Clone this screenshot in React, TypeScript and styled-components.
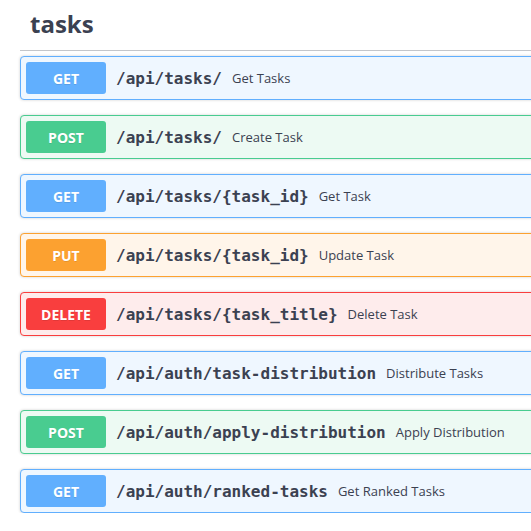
import React from "react";
import styled, { createGlobalStyle } from "styled-components";

const Global = createGlobalStyle`
  html, body { margin: 0; padding: 0; background: #fff; overflow: hidden; }
  body { font-family: "Open Sans", sans-serif; color: #3b4151; }
`;

type Method = "GET" | "POST" | "PUT" | "DELETE";

const colors: Record<Method, { main: string; bg: string }> = {
  GET: { main: "#61affe", bg: "#eff7ff" },
  POST: { main: "#49cc90", bg: "#edfaf3" },
  PUT: { main: "#fca130", bg: "#fff5ea" },
  DELETE: { main: "#f93e3e", bg: "#feecec" },
};

const Wrapper = styled.div`
  width: 600px;
  padding: 0 0 0 20px;
  display: flex;
  flex-direction: column;
`;

const TagHeading = styled.h3`
  margin: 0 0 5px;
  padding: 7px 20px 10px 10px;
  font-family: "Open Sans", sans-serif;
  font-size: 24px;
  font-weight: 700;
  line-height: normal;
  color: #3b4151;
  border-bottom: 1px solid rgba(59, 65, 81, 0.3);
`;

const List = styled.div`
  display: flex;
  flex-direction: column;
  gap: 15px;
`;

const Block = styled.div<{ $method: Method }>`
  display: flex;
  align-items: center;
  padding: 5px;
  border: 1px solid ${(p) => colors[p.$method].main};
  background: ${(p) => colors[p.$method].bg};
  border-radius: 4px;
  box-shadow: 0 0 3px rgba(0, 0, 0, 0.19);
`;

const Badge = styled.span<{ $method: Method }>`
  flex: 0 0 auto;
  width: 80px;
  height: 32px;
  display: flex;
  align-items: center;
  justify-content: center;
  background: ${(p) => colors[p.$method].main};
  color: #fff;
  border-radius: 3px;
  font-family: "Open Sans", sans-serif;
  font-size: 14px;
  font-weight: 700;
  text-shadow: 0 1px 0 rgba(0, 0, 0, 0.1);
`;

const Path = styled.span`
  padding: 0 10px;
  font-family: "DejaVu Sans Mono", monospace;
  font-size: 16px;
  font-weight: 700;
  color: #3b4151;
  white-space: nowrap;
`;

const Desc = styled.span`
  font-family: "Open Sans", sans-serif;
  font-size: 13px;
  color: #3b4151;
  white-space: nowrap;
`;

const ops: { method: Method; path: string; desc: string }[] = [
  { method: "GET", path: "/api/tasks/", desc: "Get Tasks" },
  { method: "POST", path: "/api/tasks/", desc: "Create Task" },
  { method: "GET", path: "/api/tasks/{task_id}", desc: "Get Task" },
  { method: "PUT", path: "/api/tasks/{task_id}", desc: "Update Task" },
  { method: "DELETE", path: "/api/tasks/{task_title}", desc: "Delete Task" },
  { method: "GET", path: "/api/auth/task-distribution", desc: "Distribute Tasks" },
  { method: "POST", path: "/api/auth/apply-distribution", desc: "Apply Distribution" },
  { method: "GET", path: "/api/auth/ranked-tasks", desc: "Get Ranked Tasks" },
];

export default function App() {
  return (
    <>
      <Global />
      <Wrapper>
        <TagHeading>tasks</TagHeading>
        <List>
          {ops.map((o, i) => (
            <Block key={i} $method={o.method}>
              <Badge $method={o.method}>{o.method}</Badge>
              <Path>{o.path}</Path>
              <Desc>{o.desc}</Desc>
            </Block>
          ))}
        </List>
      </Wrapper>
    </>
  );
}
